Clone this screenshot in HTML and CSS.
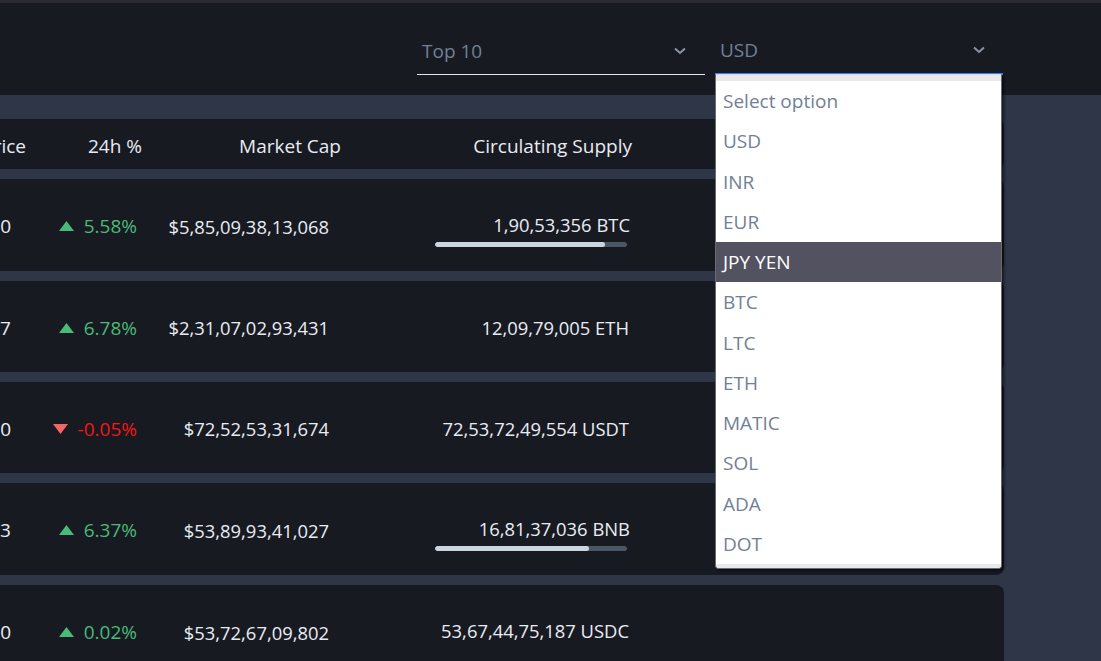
FILE: index.html
```html
<!DOCTYPE html>
<html lang="en">
<head>
<meta charset="utf-8">
<title>Crypto Market</title>
<link rel="stylesheet" href="styles.css">
</head>
<body>
<div class="topbar"></div>
<header class="header">
  <div class="select">
    <span>Top 10</span>
    <svg class="chev" width="12" height="8" viewBox="0 0 12 8"><path d="M1 1.5 L6 6 L11 1.5" fill="none" stroke="#8a94a6" stroke-width="2"/></svg>
  </div>
  <div class="select select-open">
    <span>USD</span>
    <svg class="chev" width="12" height="8" viewBox="0 0 12 8"><path d="M1 1.5 L6 6 L11 1.5" fill="none" stroke="#8a94a6" stroke-width="2"/></svg>
  </div>
</header>

<main class="table">
  <div class="row head">
    <div class="c price">Price</div>
    <div class="c pct">24h %</div>
    <div class="c mcap">Market Cap</div>
    <div class="c supply">Circulating Supply</div>
    <div class="c rest"></div>
  </div>

  <div class="row r-bar">
    <div class="c price">$30,708.00</div>
    <div class="c pct up"><svg class="tri" width="15" height="10" viewBox="0 0 15 10"><polygon points="7.5,0 15,10 0,10"/></svg>5.58%</div>
    <div class="c mcap num">$5,85,09,38,13,068</div>
    <div class="c supply num with-bar"><span>1,90,53,356 BTC</span><div class="bar"><div class="fill" style="width:88.5%"></div></div></div>
    <div class="c rest"></div>
  </div>

  <div class="row r-plain">
    <div class="c price">$1,910.07</div>
    <div class="c pct up"><svg class="tri" width="15" height="10" viewBox="0 0 15 10"><polygon points="7.5,0 15,10 0,10"/></svg>6.78%</div>
    <div class="c mcap num">$2,31,07,02,93,431</div>
    <div class="c supply num"><span>12,09,79,005 ETH</span></div>
    <div class="c rest"></div>
  </div>

  <div class="row r-plain">
    <div class="c price">$1.000</div>
    <div class="c pct down"><svg class="tri" width="15" height="10" viewBox="0 0 15 10"><polygon points="0,0 15,0 7.5,10"/></svg>-0.05%</div>
    <div class="c mcap num">$72,52,53,31,674</div>
    <div class="c supply num"><span>72,53,72,49,554 USDT</span></div>
    <div class="c rest"></div>
  </div>

  <div class="row r-bar">
    <div class="c price">$320.53</div>
    <div class="c pct up"><svg class="tri" width="15" height="10" viewBox="0 0 15 10"><polygon points="7.5,0 15,10 0,10"/></svg>6.37%</div>
    <div class="c mcap num">$53,89,93,41,027</div>
    <div class="c supply num with-bar"><span>16,81,37,036 BNB</span><div class="bar"><div class="fill" style="width:80%"></div></div></div>
    <div class="c rest"></div>
  </div>

  <div class="row r-plain last">
    <div class="c price">$1.000</div>
    <div class="c pct up"><svg class="tri" width="15" height="10" viewBox="0 0 15 10"><polygon points="7.5,0 15,10 0,10"/></svg>0.02%</div>
    <div class="c mcap num">$53,72,67,09,802</div>
    <div class="c supply num sup-last"><span>53,67,44,75,187 USDC</span></div>
    <div class="c rest"></div>
  </div>
</main>

<div class="dropdown">
  <div class="opt">Select option</div>
  <div class="opt">USD</div>
  <div class="opt">INR</div>
  <div class="opt">EUR</div>
  <div class="opt active">JPY YEN</div>
  <div class="opt">BTC</div>
  <div class="opt">LTC</div>
  <div class="opt">ETH</div>
  <div class="opt">MATIC</div>
  <div class="opt">SOL</div>
  <div class="opt">ADA</div>
  <div class="opt">DOT</div>
</div>
</body>
</html>
```
FILE: styles.css
```css
* { box-sizing: border-box; }
html, body { margin: 0; padding: 0; }
body {
  background: #2e3648;
  font-family: "Open Sans", "Noto Sans", Arial, sans-serif;
  font-size: 19px;
  color: #e8ecf2;
  width: 1101px;
  height: 661px;
  overflow: hidden;
  position: relative;
}
.topbar { height: 3px; background: #2b2a33; }
.header {
  height: 92px;
  background: #181a22;
  display: flex;
  justify-content: flex-end;
  align-items: flex-start;
  gap: 10px;
  padding: 24px 98px 0 0;
}
.select {
  width: 288px;
  height: 48px;
  border-bottom: 1px solid #e2e8f0;
  display: flex;
  align-items: center;
  justify-content: space-between;
  padding: 0 19px 0 5px;
  color: #718096;
  font-size: 19px;
}
.select-open { border-bottom: 2px solid #3b82f6; padding-right: 18px; }
.chev { display: block; }

.table {
  margin-top: 24px;
  width: 1004px;
  display: flex;
  flex-direction: column;
  gap: 10px;
}
.row {
  display: grid;
  grid-template-columns: 40px 120px 190px 300px 1fr;
  background: #181a22;
  border-radius: 0 8px 8px 0;
}
.row.head { height: 50px; padding-top: 4px; }
.r-bar { height: 92px; }
.r-plain { height: 91px; }
.row.last { border-radius: 0 8px 0 0; height: 100px; }
.c {
  display: flex;
  align-items: center;
  justify-content: flex-end;
  white-space: nowrap;
}
.num { font-size: 18.4px; }
.r-plain .c, .r-bar .c { padding-top: 2px; }
.price { padding-right: 29px; }
.pct { padding-right: 23px; }
.mcap { padding-right: 21px; }
.supply { padding-right: 21px; }
.head .price { padding-right: 14px; }
.head .pct { padding-right: 18px; }
.head .mcap { padding-right: 9px; }
.head .supply { padding-right: 18px; }
.row.last .c { padding-top: 0; padding-bottom: 6px; }
.row.last .sup-last { padding-bottom: 10px; }

.up { color: #48bb78; }
.up .tri { fill: #48bb78; }
.down { color: #f51616; }
.down .tri { fill: #f56565; }
.tri { margin-right: 10px; flex: none; }

.with-bar {
  flex-direction: column;
  align-items: flex-end;
  justify-content: center;
  gap: 5px;
  padding-top: 8px !important;
}
.with-bar span { margin-right: -1px; }
.bar {
  width: 192px;
  height: 5px;
  border-radius: 3px;
  background: #4a5568;
  margin-right: 2px;
  overflow: hidden;
}
.fill { height: 100%; background: #cbd5e0; border-radius: 3px; }

.dropdown {
  position: absolute;
  left: 715px;
  top: 74px;
  width: 287px;
  height: 495px;
  background: #ffffff;
  border: 1px solid #6b6b73;
  border-top-color: #d9d9de;
  border-radius: 2px 2px 4px 4px;
  box-shadow: 2px 2px 3px rgba(0, 0, 0, 0.55);
  padding: 6px 0 4px 0;
  display: flex;
  flex-direction: column;
}
.dropdown::before, .dropdown::after {
  content: "";
  position: absolute;
  left: 0;
  right: 0;
  height: 6px;
  background: #e9e9ed;
}
.dropdown::before { top: 0; }
.dropdown::after { bottom: 0; height: 4px; border-radius: 0 0 3px 3px; }
.opt {
  height: 40.27px;
  display: flex;
  align-items: center;
  padding-left: 7px;
  color: #718096;
  font-size: 19px;
}
.opt.active { background: #535260; color: #ffffff; }
```
